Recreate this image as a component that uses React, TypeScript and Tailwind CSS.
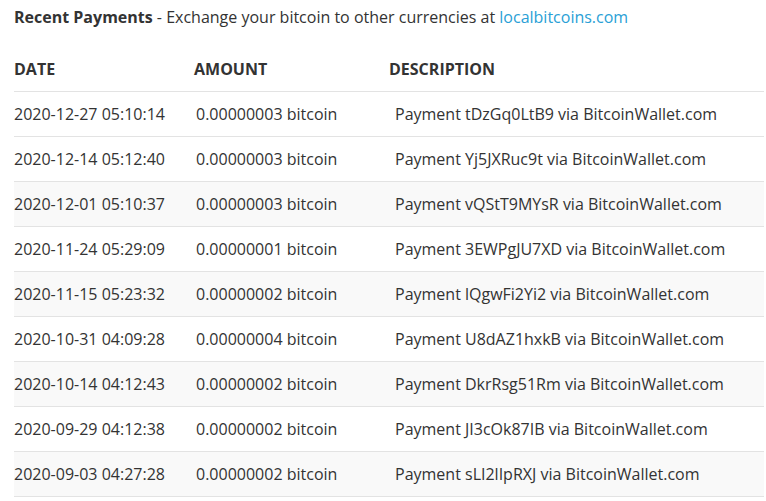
const payments = [
  ["2020-12-27 05:10:14", "0.00000003", "tDzGq0LtB9"],
  ["2020-12-14 05:12:40", "0.00000003", "Yj5JXRuc9t"],
  ["2020-12-01 05:10:37", "0.00000003", "vQStT9MYsR"],
  ["2020-11-24 05:29:09", "0.00000001", "3EWPgJU7XD"],
  ["2020-11-15 05:23:32", "0.00000002", "lQgwFi2Yi2"],
  ["2020-10-31 04:09:28", "0.00000004", "U8dAZ1hxkB"],
  ["2020-10-14 04:12:43", "0.00000002", "DkrRsg51Rm"],
  ["2020-09-29 04:12:38", "0.00000002", "JI3cOk87IB"],
  ["2020-09-03 04:27:28", "0.00000002", "sLI2lIpRXJ"],
];

export default function App() {
  return (
    <div className="min-h-screen bg-white pl-[14px] pr-[2px] text-[16px] text-[#333] [font-family:'Open_Sans',sans-serif]">
      <p className="flex h-[33px] items-center whitespace-pre">
        <span className="font-bold">Recent Payments</span>
        <span> - Exchange your bitcoin to other currencies at </span>
        <a href="#" className="text-[#2a9fd6]">
          localbitcoins.com
        </a>
      </p>
      <div className="mt-[13px] flex h-[45px] items-center font-bold">
        <div className="w-[180px]">DATE</div>
        <div className="w-[195px]">AMOUNT</div>
        <div>DESCRIPTION</div>
      </div>
      <div className="border-b border-[#e3e3e3]">
        {payments.map(([date, amount, code], i) => (
          <div
            key={date}
            className={`flex h-[45px] items-center border-t border-[#e3e3e3] ${i % 2 === 0 && i > 0 ? "bg-[#f9f9f9]" : ""}`}
          >
            <div className="w-[182px]">{date}</div>
            <div className="w-[199px]">{amount} bitcoin</div>
            <div>Payment {code} via BitcoinWallet.com</div>
          </div>
        ))}
      </div>
    </div>
  );
}
